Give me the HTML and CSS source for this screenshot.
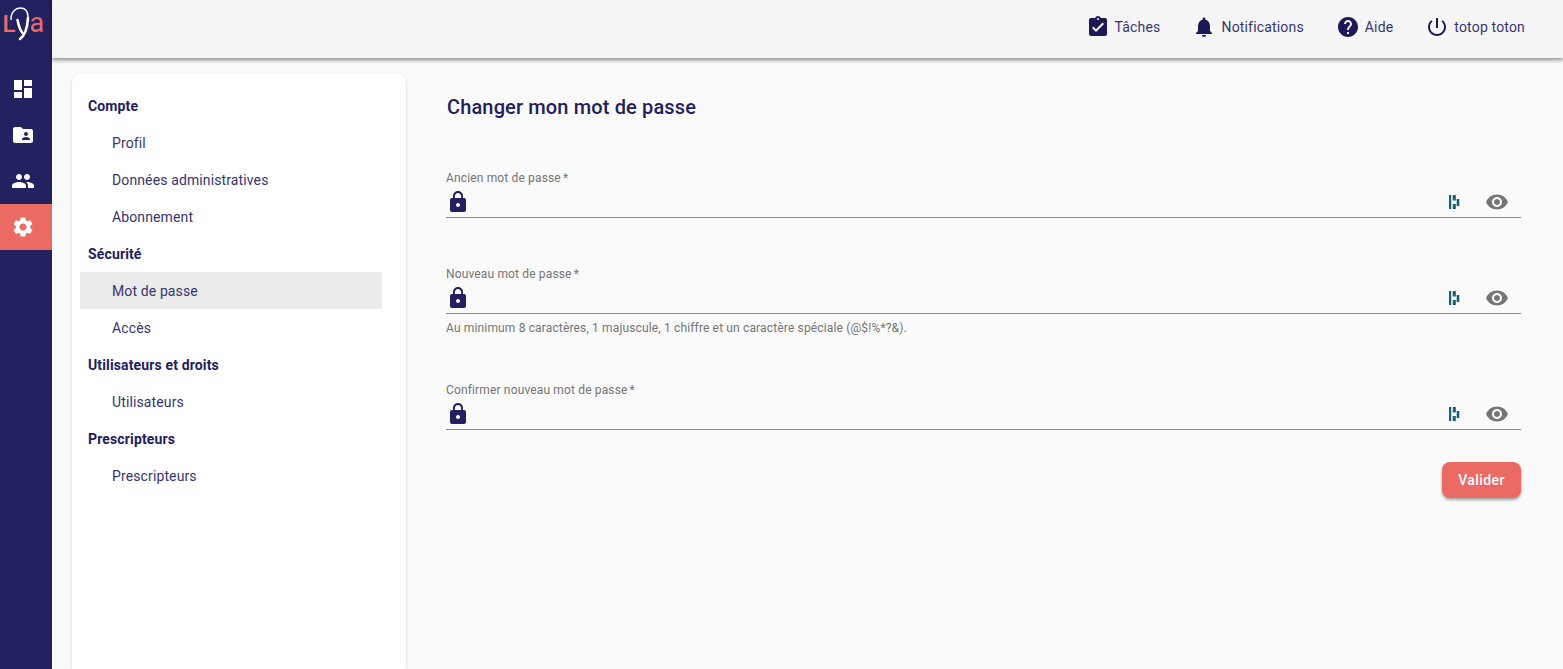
FILE: index.html
```html
<!DOCTYPE html>
<html lang="fr">
<head>
<meta charset="utf-8">
<title>Changer mon mot de passe</title>
<link rel="stylesheet" href="styles.css">
</head>
<body>
<svg class="defs" width="0" height="0" aria-hidden="true">
  <symbol id="i-lock" viewBox="0 0 24 24"><path d="M18 8h-1V6c0-2.76-2.24-5-5-5S7 3.24 7 6v2H6c-1.1 0-2 .9-2 2v10c0 1.1.9 2 2 2h12c1.1 0 2-.9 2-2V10c0-1.1-.9-2-2-2zm-6 9c-1.1 0-2-.9-2-2s.9-2 2-2 2 .9 2 2-.9 2-2 2zm3.1-9H8.9V6c0-1.71 1.39-3.1 3.1-3.1 1.71 0 3.1 1.39 3.1 3.1v2z"/></symbol>
  <symbol id="i-eye" viewBox="0 0 24 24"><path d="M12 4.5C7 4.5 2.73 7.61 1 12c1.73 4.39 6 7.5 11 7.5s9.27-3.11 11-7.5c-1.73-4.39-6-7.5-11-7.5zM12 17c-2.76 0-5-2.24-5-5s2.24-5 5-5 5 2.24 5 5-2.24 5-5 5zm0-8c-1.66 0-3 1.34-3 3s1.34 3 3 3 3-1.34 3-3-1.34-3-3-3z"/></symbol>
  <symbol id="i-dash" viewBox="0 0 12 16"><path d="M1 1h2.200v14H1zM4.800 1h3v5.500h-3zM4.800 10h3v5h-3zM8.700 5h2.600v7H8.700z"/></symbol>
</svg>
<div class="app">
  <nav class="rail">
    <div class="logo">
      <svg viewBox="0 0 52 42" width="52" height="42">
        <text class="logo-l" x="2.500" y="32">L</text>
        <text class="logo-a" x="29.500" y="32">a</text>
        <path class="logo-y" d="M17.500 20 C18.500 25 20 30 22.500 33 M28 18 C27.500 26 25.500 35 20 39"/>
        <path class="logo-loop" d="M11 20 C10.500 12 16 8 20 8 C25 8 28 11 28 17"/>
      </svg>
    </div>
    <ul class="rail-list">
      <li class="rail-item"><svg viewBox="0 0 24 24"><path d="M3 13h8V3H3v10zm0 8h8v-6H3v6zm10 0h8V11h-8v10zm0-18v6h8V3h-8z"/></svg></li>
      <li class="rail-item"><svg viewBox="0 0 24 24"><path d="M20 6h-8l-2-2H4c-1.100 0-1.990.9-1.990 2L2 18c0 1.100.9 2 2 2h16c1.100 0 2-.9 2-2V8c0-1.100-.9-2-2-2zm-5 3c1.100 0 2 .9 2 2s-.9 2-2 2-2-.9-2-2 .9-2 2-2zm4 8h-8v-1c0-1.330 2.670-2 4-2s4 .67 4 2v1z"/></svg></li>
      <li class="rail-item"><svg viewBox="0 0 24 24"><path d="M16 11c1.660 0 2.990-1.340 2.990-3S17.660 5 16 5c-1.660 0-3 1.340-3 3s1.340 3 3 3zm-8 0c1.660 0 2.990-1.340 2.990-3S9.660 5 8 5C6.340 5 5 6.340 5 8s1.340 3 3 3zm0 2c-2.330 0-7 1.170-7 3.500V19h14v-2.500c0-2.330-4.670-3.500-7-3.500zm8 0c-.29 0-.62.02-.97.05 1.160.84 1.970 1.970 1.970 3.450V19h6v-2.500c0-2.330-4.670-3.500-7-3.500z"/></svg></li>
      <li class="rail-item rail-item-active"><svg viewBox="0 0 24 24"><path d="M19.140 12.940c.04-.3.06-.61.06-.94 0-.32-.02-.64-.07-.94l2.030-1.580c.18-.14.23-.41.12-.61l-1.920-3.320c-.12-.22-.37-.29-.59-.22l-2.390.96c-.5-.38-1.030-.7-1.620-.94l-.36-2.540c-.04-.24-.24-.41-.48-.41h-3.840c-.24 0-.43.17-.47.41l-.36 2.540c-.59.24-1.130.57-1.620.94l-2.390-.96c-.22-.08-.47 0-.59.22L2.740 8.870c-.12.21-.08.47.12.61l2.030 1.580c-.05.3-.09.63-.09.94s.02.64.07.94l-2.030 1.580c-.18.14-.23.41-.12.61l1.920 3.320c.12.22.37.29.59.22l2.390-.96c.5.38 1.030.7 1.620.94l.36 2.540c.05.24.24.41.48.41h3.840c.24 0 .44-.17.47-.41l.36-2.540c.59-.24 1.130-.56 1.620-.94l2.390.96c.22.08.47 0 .59-.22l1.920-3.320c.12-.22.07-.47-.12-.61l-2.010-1.580zM12 15.600c-1.980 0-3.600-1.620-3.600-3.600s1.620-3.600 3.600-3.600 3.600 1.620 3.600 3.600-1.620 3.600-3.600 3.600z"/></svg></li>
    </ul>
  </nav>
  <div class="page">
    <header class="topbar">
      <a class="top-link"><svg viewBox="0 0 24 24"><path d="M19 3h-4.180C14.400 1.840 13.300 1 12 1c-1.300 0-2.400.84-2.820 2H5c-1.100 0-2 .9-2 2v14c0 1.100.9 2 2 2h14c1.100 0 2-.9 2-2V5c0-1.100-.9-2-2-2zm-7 0c.55 0 1 .45 1 1s-.45 1-1 1-1-.45-1-1 .45-1 1-1zm-2 14l-4-4 1.410-1.410L10 14.170l6.590-6.590L18 9l-8 8z"/></svg><span>Tâches</span></a>
      <a class="top-link"><svg viewBox="0 0 24 24"><path d="M12 22c1.100 0 2-.9 2-2h-4c0 1.100.89 2 2 2zm6-6v-5c0-3.070-1.640-5.640-4.500-6.320V4c0-.83-.67-1.500-1.500-1.500s-1.500.67-1.500 1.500v.68C7.630 5.360 6 7.920 6 11v5l-2 2v1h16v-1l-2-2z"/></svg><span>Notifications</span></a>
      <a class="top-link"><svg viewBox="0 0 24 24"><path d="M12 2C6.480 2 2 6.480 2 12s4.480 10 10 10 10-4.480 10-10S17.520 2 12 2zm1 17h-2v-2h2v2zm2.070-7.750l-.9.92C13.450 12.900 13 13.500 13 15h-2v-.5c0-1.100.45-2.100 1.170-2.830l1.240-1.260c.37-.36.59-.86.59-1.410 0-1.100-.9-2-2-2s-2 .9-2 2H8c0-2.210 1.790-4 4-4s4 1.790 4 4c0 .88-.36 1.680-.93 2.250z"/></svg><span>Aide</span></a>
      <a class="top-link"><svg viewBox="0 0 24 24"><path d="M13 3h-2v10h2V3zm4.830 2.170l-1.420 1.420C17.990 7.860 19 9.810 19 12c0 3.870-3.130 7-7 7s-7-3.130-7-7c0-2.190 1.010-4.140 2.580-5.420L6.170 5.170C4.230 6.820 3 9.260 3 12c0 4.970 4.030 9 9 9s9-4.030 9-9c0-2.740-1.230-5.180-3.170-6.830z"/></svg><span>totop toton</span></a>
    </header>
    <div class="body">
      <aside class="menu-card">
        <ul class="menu">
          <li class="menu-head">Compte</li>
          <li class="menu-item">Profil</li>
          <li class="menu-item">Données administratives</li>
          <li class="menu-item">Abonnement</li>
          <li class="menu-head">Sécurité</li>
          <li class="menu-item menu-item-active">Mot de passe</li>
          <li class="menu-item">Accès</li>
          <li class="menu-head">Utilisateurs et droits</li>
          <li class="menu-item">Utilisateurs</li>
          <li class="menu-head">Prescripteurs</li>
          <li class="menu-item">Prescripteurs</li>
        </ul>
      </aside>
      <main class="content">
        <h1 class="title">Changer mon mot de passe</h1>
        <form class="form">
          <div class="field">
            <label class="field-label">Ancien mot de passe<span class="req">*</span></label>
            <div class="field-row">
              <svg class="lock"><use href="#i-lock"/></svg>
              <svg class="dash"><use href="#i-dash"/></svg>
              <svg class="eye"><use href="#i-eye"/></svg>
            </div>
          </div>
          <div class="field">
            <label class="field-label">Nouveau mot de passe<span class="req">*</span></label>
            <div class="field-row">
              <svg class="lock"><use href="#i-lock"/></svg>
              <svg class="dash"><use href="#i-dash"/></svg>
              <svg class="eye"><use href="#i-eye"/></svg>
            </div>
            <p class="hint">Au minimum 8 caractères, 1 majuscule, 1 chiffre et un caractère spéciale (@$!%*?&amp;).</p>
          </div>
          <div class="field">
            <label class="field-label">Confirmer nouveau mot de passe<span class="req">*</span></label>
            <div class="field-row">
              <svg class="lock"><use href="#i-lock"/></svg>
              <svg class="dash"><use href="#i-dash"/></svg>
              <svg class="eye"><use href="#i-eye"/></svg>
            </div>
          </div>
          <div class="actions"><button class="submit" type="button">Valider</button></div>
        </form>
      </main>
    </div>
  </div>
</div>
</body>
</html>
```
FILE: styles.css
```css
* { box-sizing: border-box; }
html, body { margin: 0; height: 100%; overflow: hidden; }
body { font-family: Roboto, "Liberation Sans", sans-serif; color: #22205f; background: #fafafa; }
.defs { position: absolute; }
ul { list-style: none; margin: 0; padding: 0; }

.app { display: flex; height: 669px; }

.rail { width: 52px; flex: none; background: #23215f; }
.logo { height: 42px; margin-bottom: 24px; }
.logo svg { display: block; }
.logo-l { font-family: Roboto, sans-serif; font-size: 24px; font-weight: 500; fill: #ec6b65; }
.logo-a { font-family: Roboto, sans-serif; font-size: 27px; fill: #ec6b65; }
.logo-y { fill: none; stroke: #fff; stroke-width: 2.600; stroke-linecap: round; }
.logo-loop { fill: none; stroke: #fff; stroke-width: 1.400; }
.rail-item { height: 46px; display: flex; align-items: center; justify-content: center; padding-right: 6px; }
.rail-item svg { width: 24px; height: 24px; fill: #fff; }
.rail-item-active { background: #eb6a64; }

.page { flex: 1; min-width: 0; display: flex; flex-direction: column; }
.topbar { height: 58px; flex: none; background: #f5f5f5; box-shadow: 0 2px 4px rgba(0,0,0,.45); display: flex; justify-content: flex-end; align-items: center; gap: 32px; padding: 0 38px 4px 0; position: relative; z-index: 2; }
.top-link { display: flex; align-items: center; gap: 5px; font-size: 14px; letter-spacing: .17px; color: #37356f; }
.top-link svg { width: 24px; height: 24px; fill: #1c1a54; }

.body { flex: 1; display: flex; min-height: 0; }
.menu-card { width: 334px; flex: none; margin: 15px 0 0 20px; background: #fff; border-radius: 10px 10px 0 0; box-shadow: 0 1px 3px rgba(0,0,0,.18); padding: 14px 24px 0 8px; }
.menu-head, .menu-item { height: 37px; display: flex; align-items: center; font-size: 14px; letter-spacing: .12px; }
.menu-head { font-weight: 700; padding-left: 8px; color: #22205f; letter-spacing: .14px; }
.menu-item { padding-left: 32px; color: #37356f; }
.menu-item-active { background: #ebebeb; }

.content { flex: 1; min-width: 0; padding: 37px 42px 0 40px; }
.title { margin: 0; font-size: 20px; line-height: 24px; font-weight: 500; letter-spacing: .14px; color: #22205f; padding-left: 1px; }
.form { margin-top: 45px; }
.field { height: 96px; padding-top: 7px; }
.field:nth-child(2) { height: 116px; }
.field-label { display: block; font-size: 12px; line-height: 14px; letter-spacing: .15px; color: #757575; }
.req { margin-left: 2px; }
.field-row { height: 33px; display: flex; align-items: center; border-bottom: 1px solid #8a8a8a; padding: 2px 12px 0 0; }
.lock { width: 24px; height: 24px; fill: #22205f; }
.dash { width: 12px; height: 16px; fill: #13616e; margin-left: auto; }
.eye { width: 24px; height: 24px; fill: #757575; margin-left: 25px; }
.hint { margin: 8px 0 0; font-size: 12px; line-height: 13px; letter-spacing: .15px; color: #757575; }
.actions { display: flex; justify-content: flex-end; margin-top: -10px; }
.submit { width: 79px; height: 36px; border: 0; border-radius: 8px; background: #eb6a64; color: #fff; font-family: Roboto, sans-serif; font-size: 14px; font-weight: 500; letter-spacing: .4px; box-shadow: 0 2px 3px rgba(0,0,0,.35); padding: 0; }
```
